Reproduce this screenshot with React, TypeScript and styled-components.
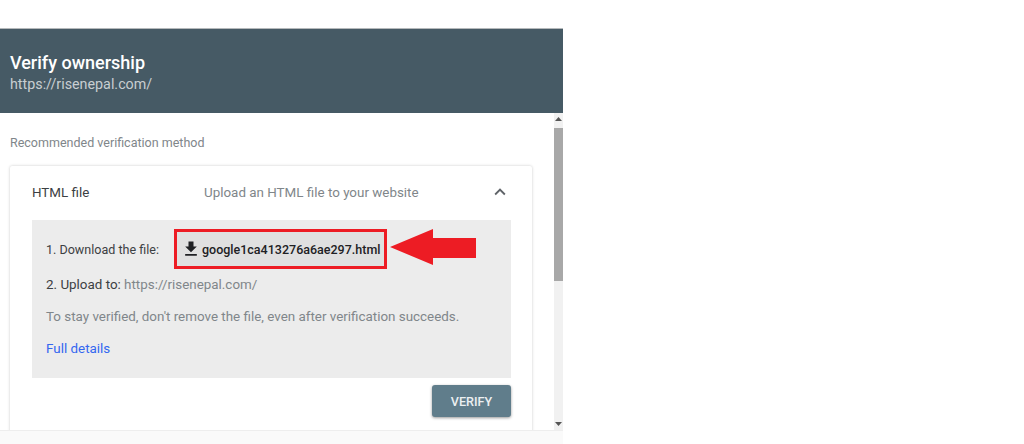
import React from "react";
import styled, { createGlobalStyle } from "styled-components";

const Global = createGlobalStyle`
  html, body { margin: 0; padding: 0; background: #fff; }
  body { font-family: Roboto, "Liberation Sans", sans-serif; overflow: hidden; }
`;

const Page = styled.div`
  width: 1024px;
  height: 444px;
  overflow: hidden;
  background: #fff;
`;
const Dialog = styled.div`
  width: 563px;
  height: 444px;
  padding-top: 28px;
  box-sizing: border-box;
  display: flex;
  flex-direction: column;
`;
const Header = styled.header`
  height: 85px;
  box-sizing: border-box;
  flex: none;
  background: #465a65;
  border-top: 1px solid #b5b9bb;
  padding: 24px 10px 0;
`;
const Title = styled.h1`
  margin: 0;
  font-size: 18px;
  line-height: 20px;
  font-weight: 500;
  color: #fff;
`;
const Subtitle = styled.div`
  font-size: 14.3px;
  line-height: 18px;
  margin-top: 2px;
  color: #c8ced1;
`;
const Middle = styled.div`
  flex: 1;
  min-height: 0;
  display: flex;
`;
const Content = styled.main`
  flex: 1;
  min-width: 0;
  padding: 22px 22px 0 10px;
  overflow: hidden;
`;
const Section = styled.div`
  font-size: 12.5px;
  line-height: 16px;
  color: #80868a;
`;
const Card = styled.section`
  margin-top: 15px;
  height: 305px;
  box-sizing: border-box;
  background: #fff;
  box-shadow: 0 0 3px rgba(0, 0, 0, 0.22);
  border-radius: 2px 2px 0 0;
  padding: 0 21px 0 22px;
`;
const CardHead = styled.div`
  height: 54px;
  box-sizing: border-box;
  padding-bottom: 2px;
  display: flex;
  align-items: center;
  font-size: 13.4px;
`;
const Method = styled.div`
  width: 172px;
  color: #3c4043;
`;
const Summary = styled.div`
  flex: 1;
  font-size: 13.4px;
  color: #80868a;
`;
const Chevron = styled.svg`
  width: 22px;
  height: 22px;
  fill: #5f6368;
`;
const Steps = styled.div`
  height: 158px;
  box-sizing: border-box;
  background: #ececec;
  padding: 9px 14px 0;
  position: relative;
`;
const DownloadRow = styled.div`
  display: flex;
  align-items: center;
  font-size: 12.55px;
  color: #3c4043;
  height: 40px;
`;
const DownloadLabel = styled.span`
  width: 129px;
`;
const DownloadButton = styled.button`
  width: 213px;
  height: 40px;
  margin-left: -1px;
  box-sizing: border-box;
  border: 3px solid #ed1c24;
  background: #e0e0e0;
  font: 500 12.5px Roboto, "Liberation Sans", sans-serif;
  color: #202124;
  display: flex;
  align-items: center;
  gap: 1px;
  padding: 0 0 0 4px;
  white-space: nowrap;
`;
const DownloadIcon = styled.svg`
  width: 20px;
  height: 20px;
  flex: none;
  fill: #202124;
`;
const Arrow = styled.svg`
  position: absolute;
  left: 355px;
  top: 8px;
  width: 90px;
  height: 38px;
  fill: #ed1c24;
`;
const Line = styled.p<{ $top: number }>`
  margin: ${(p) => p.$top}px 0 0;
  font-size: 13.4px;
  line-height: 16px;
  color: #80868a;
`;
const Strong = styled.span`
  color: #3c4043;
`;
const DetailsLink = styled.a`
  color: #3367f0;
  text-decoration: none;
`;
const Actions = styled.div`
  display: flex;
  justify-content: flex-end;
  padding-top: 7px;
`;
const Verify = styled.button`
  width: 79px;
  height: 32px;
  border: 0;
  border-radius: 3px;
  background: #607d8b;
  color: #eceff1;
  font: 500 12.6px Roboto, "Liberation Sans", sans-serif;
  box-shadow: 0 1px 3px rgba(0, 0, 0, 0.4);
`;
const Scrollbar = styled.div`
  width: 9px;
  flex: none;
  background: #f1f1f1;
  display: flex;
  flex-direction: column;
  align-items: center;
  justify-content: space-between;
  position: relative;
`;
const ScrollThumb = styled.div`
  position: absolute;
  top: 15px;
  left: 0;
  right: 0;
  height: 153px;
  background: #a8a8a8;
`;
const ScrollArrow = styled.svg`
  width: 9px;
  height: 14px;
  fill: #555;
`;
const Footer = styled.footer`
  height: 14px;
  flex: none;
  background: #fafafa;
  border-top: 1px solid #eeeeee;
  box-sizing: border-box;
`;

export default function App() {
  return (
    <Page>
      <Global />
      <Dialog>
        <Header>
          <Title>Verify ownership</Title>
          <Subtitle>https://risenepal.com/</Subtitle>
        </Header>
        <Middle>
          <Content>
            <Section>Recommended verification method</Section>
            <Card>
              <CardHead>
                <Method>HTML file</Method>
                <Summary>Upload an HTML file to your website</Summary>
                <Chevron viewBox="0 0 24 24">
                  <path d="M7.41 15.41 12 10.83l4.59 4.58L18 14l-6-6-6 6z" />
                </Chevron>
              </CardHead>
              <Steps>
                <DownloadRow>
                  <DownloadLabel>1. Download the file:</DownloadLabel>
                  <DownloadButton>
                    <DownloadIcon viewBox="0 0 24 24">
                      <path d="M19 9h-4V3H9v6H5l7 7 7-7zM5 18v2h14v-2H5z" />
                    </DownloadIcon>
                    google1ca413276a6ae297.html
                  </DownloadButton>
                </DownloadRow>
                <Arrow viewBox="0 0 90 38">
                  <path d="M3 19 46 1v9h43v20H46v7z" />
                </Arrow>
                <Line $top={8}>
                  <Strong>2. Upload to:</Strong> https://risenepal.com/
                </Line>
                <Line $top={16}>To stay verified, don't remove the file, even after verification succeeds.</Line>
                <Line $top={16}>
                  <DetailsLink href="#">Full details</DetailsLink>
                </Line>
              </Steps>
              <Actions>
                <Verify>VERIFY</Verify>
              </Actions>
            </Card>
          </Content>
          <Scrollbar>
            <ScrollArrow viewBox="0 0 9 14">
              <path d="M4.5 4 8 8H1z" />
            </ScrollArrow>
            <ScrollThumb />
            <ScrollArrow viewBox="0 0 9 14">
              <path d="M4.5 10 8 6H1z" />
            </ScrollArrow>
          </Scrollbar>
        </Middle>
        <Footer />
      </Dialog>
    </Page>
  );
}
